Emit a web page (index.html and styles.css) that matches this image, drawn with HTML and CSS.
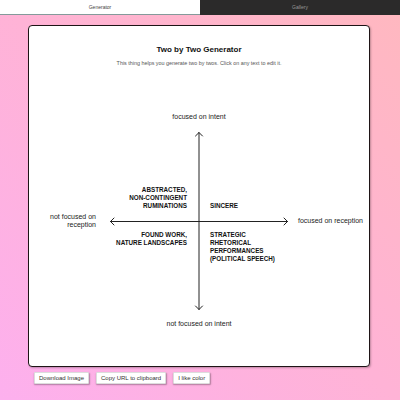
FILE: index.html
```html
<!DOCTYPE html>
<html>
<head>
<meta charset="utf-8">
<link rel="stylesheet" href="styles.css">
</head>
<body>
<div class="tabs">
  <div class="tab tab-active">Generator</div>
  <div class="tab tab-dark">Gallery</div>
</div>
<div class="card">
  <h1 class="title">Two by Two Generator</h1>
  <p class="subtitle">This thing helps you generate two by twos. Click on any text to edit it.</p>
  <div class="diagram">
    <div class="axis-label top">focused on intent</div>
    <div class="axis-label left">not focused on<br>reception</div>
    <div class="plot">
      <svg class="axes" width="178" height="178" viewBox="0 0 178 178">
        <g fill="none" stroke="#222" stroke-width="1" stroke-linecap="round" stroke-linejoin="round">
          <line x1="89" y1="0.5" x2="89" y2="177.5"/>
          <line x1="0.5" y1="89.5" x2="177.5" y2="89.5"/>
          <polyline points="85.5,4 89,0.5 92.5,4"/>
          <polyline points="85.5,174 89,177.5 92.5,174"/>
          <polyline points="4,86 0.5,89.5 4,93"/>
          <polyline points="174,86 177.5,89.5 174,93"/>
        </g>
      </svg>
      <div class="quad q-tl">ABSTRACTED,<br>NON-CONTINGENT<br>RUMINATIONS</div>
      <div class="quad q-tr">SINCERE</div>
      <div class="quad q-bl">FOUND WORK,<br>NATURE LANDSCAPES</div>
      <div class="quad q-br">STRATEGIC<br>RHETORICAL<br>PERFORMANCES<br>(POLITICAL SPEECH)</div>
    </div>
    <div class="axis-label right">focused on reception</div>
    <div class="axis-label bottom">not focused on intent</div>
  </div>
</div>
<div class="buttons">
  <button class="btn">Download Image</button>
  <button class="btn">Copy URL to clipboard</button>
  <button class="btn">I like color</button>
</div>
</body>
</html>
```
FILE: styles.css
```css
html, body {
  margin: 0;
  padding: 0;
  width: 400px;
  height: 400px;
  overflow: hidden;
}
body {
  font-family: "Liberation Sans", Arial, sans-serif;
  background: linear-gradient(to top right, #fdb0ee 0%, #ffb3d6 50%, #ffb8bf 100%);
  color: #222;
}
.tabs {
  display: flex;
  height: 15px;
}
.tab {
  flex: 1;
  text-align: center;
  font-size: 5px;
  line-height: 14px;
}
.tab-active {
  background: #fff;
  color: #444;
  border-bottom: 1px solid #849a9a;
}
.tab-dark {
  background: #2b2a2a;
  color: #999;
  line-height: 15px;
}
.card {
  margin: 10px 0 0 28px;
  width: 340px;
  height: 340px;
  background: #fff;
  border: 1.5px solid #1e1416;
  border-radius: 4px;
  box-shadow: 1px 1px 2px rgba(0,0,0,0.25);
}
.title {
  margin: 19px 0 0;
  font-size: 8px;
  line-height: 10px;
  font-weight: bold;
  text-align: center;
  color: #111;
}
.subtitle {
  margin: 5px 0 0;
  font-size: 5.4px;
  line-height: 6px;
  text-align: center;
  color: #555;
}
.diagram {
  margin-top: 47px;
  display: grid;
  grid-template-columns: 1fr 178px 1fr;
  grid-template-rows: 19px 178px 18px;
}
.axis-label {
  font-size: 7px;
  line-height: 8px;
  color: #222;
}
.top {
  grid-column: 2;
  grid-row: 1;
  text-align: center;
  align-self: start;
}
.bottom {
  grid-column: 2;
  grid-row: 3;
  text-align: center;
  align-self: start;
  padding-top: 10px;
}
.left {
  grid-column: 1;
  grid-row: 2;
  align-self: center;
  text-align: right;
  padding-right: 14px;
}
.right {
  grid-column: 3;
  grid-row: 2;
  align-self: center;
  padding-left: 10px;
}
.plot {
  grid-column: 2;
  grid-row: 2;
  position: relative;
  display: grid;
  grid-template-columns: 1fr 1fr;
  grid-template-rows: 1fr 1fr;
}
.axes {
  position: absolute;
  left: 0;
  top: 0;
}
.quad {
  font-size: 6.3px;
  line-height: 8px;
  font-weight: bold;
  color: #111;
}
.q-tl {
  align-self: end;
  text-align: right;
  padding: 0 12px 11px 0;
}
.q-tr {
  align-self: end;
  padding: 0 0 11px 11px;
}
.q-bl {
  align-self: start;
  text-align: right;
  padding: 10px 12px 0 0;
}
.q-br {
  align-self: start;
  padding: 10px 0 0 11px;
}
.buttons {
  display: flex;
  gap: 7px;
  margin: 5px 0 0 34px;
}
.btn {
  font-family: "Liberation Sans", Arial, sans-serif;
  font-size: 6px;
  line-height: 8px;
  height: 12px;
  padding: 0 4px;
  background: #fff;
  color: #333;
  border: 1px solid #ddd;
  border-radius: 1px;
  box-shadow: 0.5px 1px 1.5px rgba(0,0,0,0.3);
}
```
